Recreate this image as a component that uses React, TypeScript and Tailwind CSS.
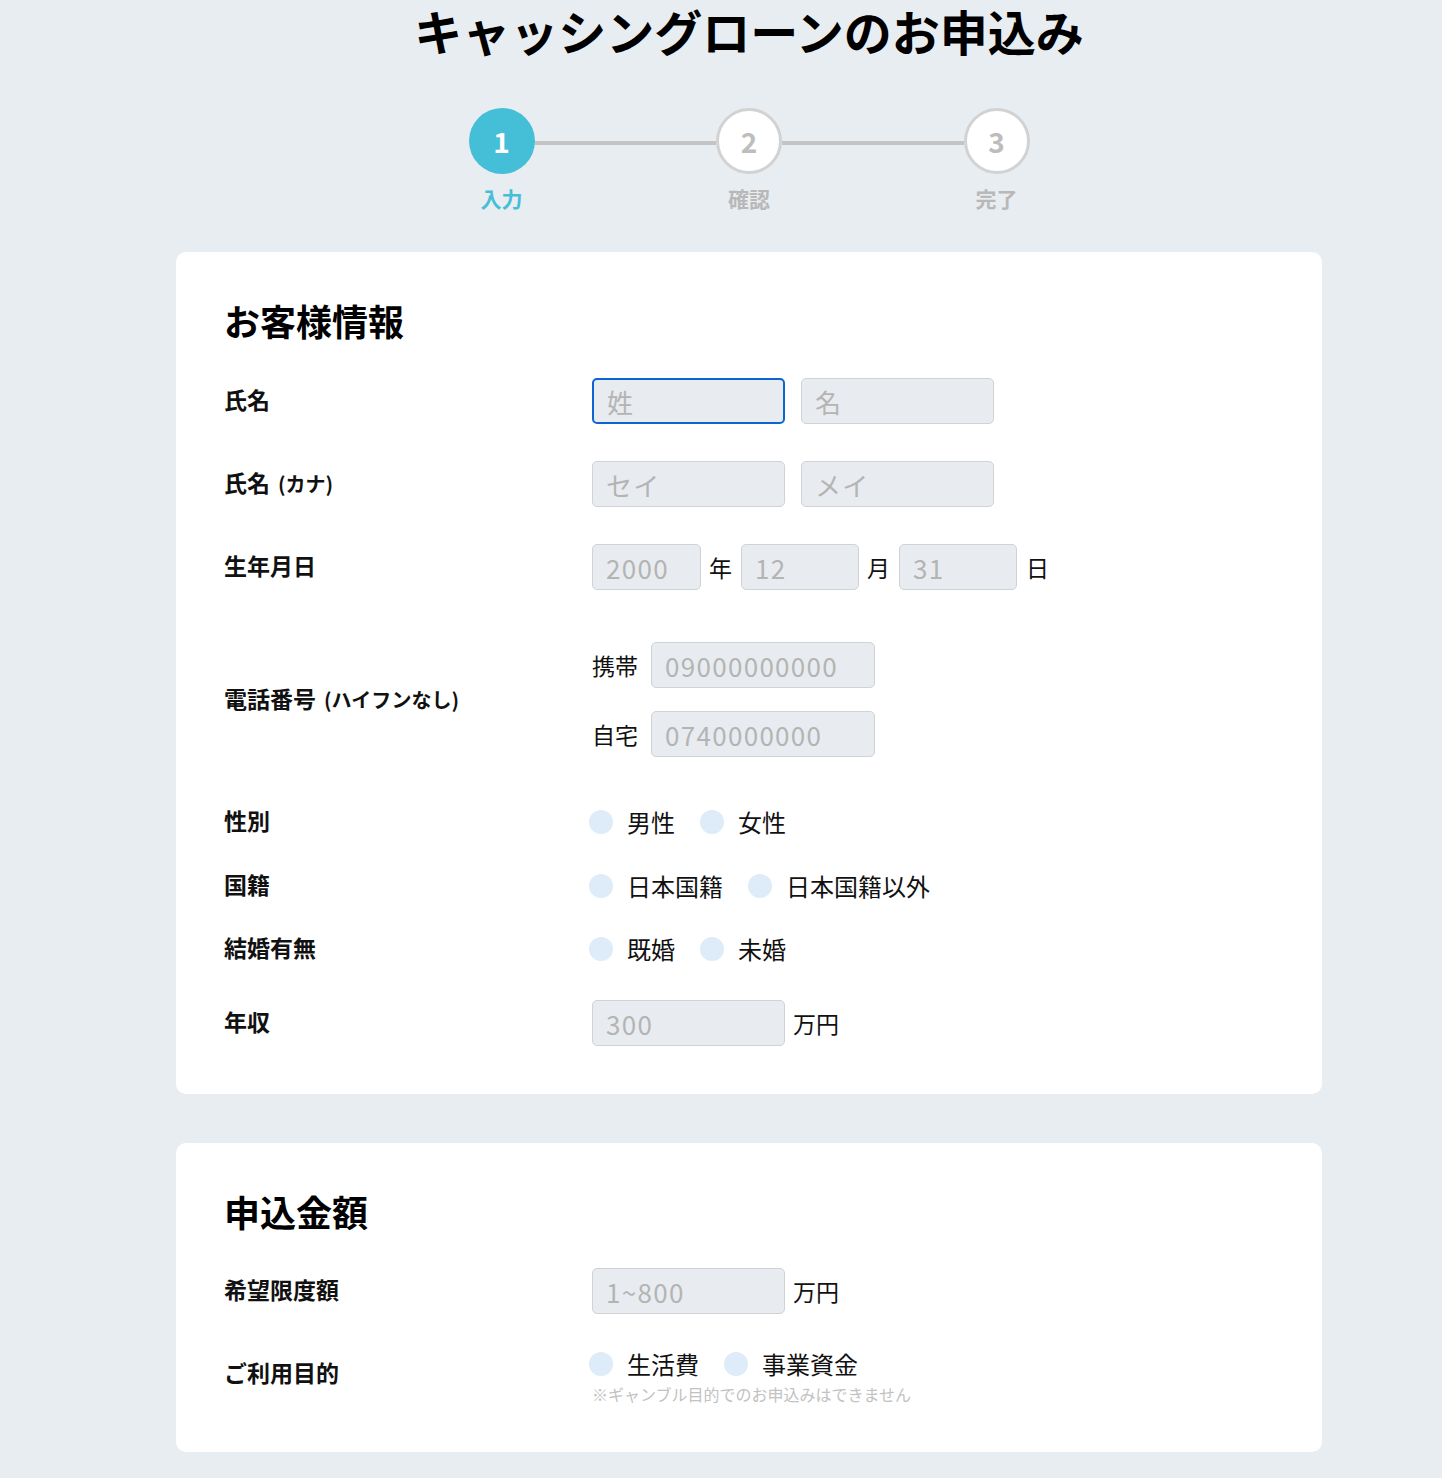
import React from "react";

const font = { fontFamily: '"Noto Sans CJK JP", "Noto Sans", sans-serif' };

const inputBase =
  "h-[46px] rounded-[5px] bg-[#e8ecf0] px-[13px] text-[26px] tracking-[1.3px] text-[#333] placeholder:text-[#b4b4b4] outline-none";

function TextInput({
  placeholder,
  width,
  focused,
}: {
  placeholder: string;
  width: string;
  focused?: boolean;
}) {
  return (
    <input
      type="text"
      placeholder={placeholder}
      className={`${inputBase} ${width} ${
        focused ? "border-2 border-[#0b66d1] px-[12px]" : "border border-[#cfd3d6]"
      }`}
    />
  );
}

function Radio({ label }: { label: string }) {
  return (
    <label className="flex items-center gap-[14px] text-[24px] text-[#111]">
      <span className="h-[24px] w-[24px] rounded-full bg-[#deebf8]" />
      {label}
    </label>
  );
}

function Row({
  label,
  sub,
  className = "",
  children,
}: {
  label: string;
  sub?: string;
  className?: string;
  children: React.ReactNode;
}) {
  return (
    <div className={`flex items-center ${className}`}>
      <div className="-ml-[2px] -mt-[3px] w-[368px] shrink-0 text-[23px] font-bold text-[#111]">
        {label}
        {sub && <span className="ml-[8px] text-[20px]">{sub}</span>}
      </div>
      {children}
    </div>
  );
}

function Step({ n, label, active }: { n: number; label: string; active?: boolean }) {
  return (
    <div className="flex w-[66px] flex-col items-center">
      <div
        className={`flex h-[66px] w-[66px] items-center justify-center rounded-full text-[28px] font-bold ${
          active
            ? "bg-[#45bfd8] text-white"
            : "border-[3px] border-[#d2d2d2] bg-white text-[#bdbdbd]"
        }`}
      >
        {n}
      </div>
      <div
        className={`mt-[10px] whitespace-nowrap text-[21px] font-bold leading-[28px] ${
          active ? "text-[#45bfd8]" : "text-[#b8b8b8]"
        }`}
      >
        {label}
      </div>
    </div>
  );
}

export default function App() {
  return (
    <div className="min-h-[1478px] bg-[#e8edf1] pb-[26px]" style={font}>
      <div className="ml-[176px] w-[1146px]">
        <h1 className="text-center text-[48px] font-bold leading-[60px] text-black">
          キャッシングローンのお申込み
        </h1>

        <div className="mx-auto mt-[48px] flex w-[561px] items-start">
          <Step n={1} label="入力" active />
          <div className="mt-[33px] h-[4px] flex-1 bg-[#c2c4c6]" />
          <Step n={2} label="確認" />
          <div className="mt-[33px] h-[4px] flex-1 bg-[#c2c4c6]" />
          <Step n={3} label="完了" />
        </div>

        <section className="mt-[40px] rounded-[10px] bg-white px-[50px] pb-[48px] pt-[41px]">
          <h2 className="-ml-[2px] text-[36px] font-bold leading-[54px] text-black">
            お客様情報
          </h2>

          <Row label="氏名" className="mt-[31px]">
            <div className="flex gap-[16px]">
              <TextInput placeholder="姓" width="w-[193px]" focused />
              <TextInput placeholder="名" width="w-[193px]" />
            </div>
          </Row>

          <Row label="氏名" sub="(カナ)" className="mt-[37px]">
            <div className="flex gap-[16px]">
              <TextInput placeholder="セイ" width="w-[193px]" />
              <TextInput placeholder="メイ" width="w-[193px]" />
            </div>
          </Row>

          <Row label="生年月日" className="mt-[37px]">
            <div className="flex items-center text-[23px] text-[#111]">
              <TextInput placeholder="2000" width="w-[109px]" />
              <span className="ml-[8px] mr-[9px]">年</span>
              <TextInput placeholder="12" width="w-[118px]" />
              <span className="ml-[8px] mr-[9px]">月</span>
              <TextInput placeholder="31" width="w-[118px]" />
              <span className="ml-[9px]">日</span>
            </div>
          </Row>

          <Row label="電話番号" sub="(ハイフンなし)" className="mt-[52px]">
            <div className="flex flex-col gap-[23px] text-[23px] text-[#111]">
              <div className="flex items-center gap-[13px]">
                <span>携帯</span>
                <TextInput placeholder="09000000000" width="w-[224px]" />
              </div>
              <div className="flex items-center gap-[13px]">
                <span>自宅</span>
                <TextInput placeholder="0740000000" width="w-[224px]" />
              </div>
            </div>
          </Row>

          <Row label="性別" className="mt-[45px] h-[40px]">
            <div className="-ml-[3px] flex gap-[25px]">
              <Radio label="男性" />
              <Radio label="女性" />
            </div>
          </Row>

          <Row label="国籍" className="mt-[24px] h-[40px]">
            <div className="-ml-[3px] flex gap-[25px]">
              <Radio label="日本国籍" />
              <Radio label="日本国籍以外" />
            </div>
          </Row>

          <Row label="結婚有無" className="mt-[23px] h-[40px]">
            <div className="-ml-[3px] flex gap-[25px]">
              <Radio label="既婚" />
              <Radio label="未婚" />
            </div>
          </Row>

          <Row label="年収" className="mt-[31px]">
            <div className="flex items-center gap-[8px] text-[23px] text-[#111]">
              <TextInput placeholder="300" width="w-[193px]" />
              <span>万円</span>
            </div>
          </Row>
        </section>

        <section className="mt-[49px] rounded-[10px] bg-white px-[50px] pb-[48px] pt-[41px]">
          <h2 className="-ml-[2px] text-[36px] font-bold leading-[54px] text-black">申込金額</h2>

          <Row label="希望限度額" className="mt-[30px]">
            <div className="flex items-center gap-[8px] text-[23px] text-[#111]">
              <TextInput placeholder="1~800" width="w-[193px]" />
              <span>万円</span>
            </div>
          </Row>

          <Row label="ご利用目的" className="mt-[30px]">
            <div className="-ml-[3px] flex flex-col">
              <div className="flex h-[40px] items-center gap-[25px]">
                <Radio label="生活費" />
                <Radio label="事業資金" />
              </div>
              <p className="ml-[3px] text-[16px] leading-[20px] text-[#c2c2c2]">
                ※ギャンブル目的でのお申込みはできません
              </p>
            </div>
          </Row>
        </section>
      </div>
    </div>
  );
}
